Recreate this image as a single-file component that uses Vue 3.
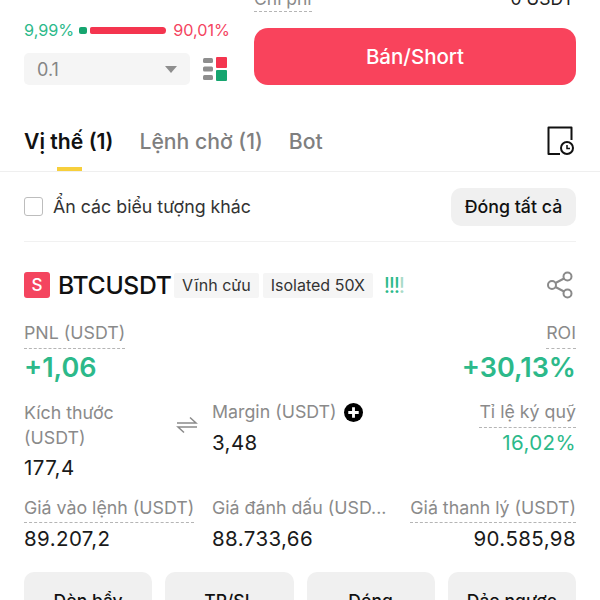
<script setup>
const actions = ['Đòn bẩy', 'TP/SL', 'Đóng', 'Đảo ngược']
</script>

<template>
  <div class="page">
    <section class="order">
      <div class="left">
        <div class="ratio">
          <span class="green">9,99%</span>
          <div class="bar"><i class="bar-buy"></i><i class="bar-sell"></i></div>
          <span class="red">90,01%</span>
        </div>
        <div class="qty-row">
          <div class="select"><span>0.1</span><i class="caret"></i></div>
          <svg class="book" width="26" height="26" viewBox="0 0 26 26">
            <rect x="1" y="2" width="10" height="5" rx="1.5" fill="#8e8e8e" />
            <rect x="1" y="10.5" width="10" height="5" rx="1.5" fill="#8e8e8e" />
            <rect x="1" y="19" width="10" height="5" rx="1.5" fill="#8e8e8e" />
            <rect x="14" y="1" width="11" height="11" rx="1" fill="#f4354f" />
            <rect x="14" y="14" width="11" height="11" rx="1" fill="#16a56f" />
          </svg>
        </div>
      </div>
      <div class="right">
        <div class="fee"><span class="dotted fee-label">Chi phí</span><span class="fee-value">0 USDT</span></div>
        <button class="short">Bán/Short</button>
      </div>
    </section>

    <nav class="tabs">
      <span class="tab active">Vị thế (1)</span>
      <span class="tab">Lệnh chờ (1)</span>
      <span class="tab">Bot</span>
      <svg class="history" width="30" height="30" viewBox="0 0 30 30" fill="none" stroke="#111" stroke-width="2">
        <path d="M14 28H2.500V1.500H25.500V14" stroke-linejoin="round" />
        <circle cx="21" cy="22" r="6" />
        <path d="M21 19V22.500H24" stroke-width="1.500" />
      </svg>
    </nav>

    <div class="filter">
      <label class="check"><i class="box"></i>Ẩn các biểu tượng khác</label>
      <button class="close-all">Đóng tất cả</button>
    </div>

    <section class="position">
      <div class="symbol">
        <span class="side">S</span>
        <span class="name">BTCUSDT</span>
        <span class="tag">Vĩnh cửu</span>
        <span class="tag">Isolated 50X</span>
        <span class="bangs"><b>!</b><b>!</b><b>!</b><b class="dim">!</b></span>
        <svg class="share" width="28" height="28" viewBox="0 0 28 28" fill="none" stroke="#8a8a8a" stroke-width="2">
          <circle cx="6" cy="14" r="4" />
          <circle cx="21.500" cy="5.500" r="4" />
          <circle cx="21.500" cy="22.500" r="4" />
          <path d="M9.500 12L18 7.500M9.500 16L18 20.500" />
        </svg>
      </div>

      <div class="pnl">
        <div class="col">
          <span class="label dotted">PNL (USDT)</span>
          <span class="big">+1,06</span>
        </div>
        <div class="col end">
          <span class="label dotted">ROI</span>
          <span class="big">+30,13%</span>
        </div>
      </div>

      <div class="grid size-row">
        <div class="col">
          <span class="label wrap">Kích thước (USDT)</span>
          <span class="value mt-size">177,4</span>
        </div>
        <div class="col">
          <span class="label with-icon">
            <svg class="swap" width="22" height="20" viewBox="0 0 22 20" fill="none" stroke="#8a8a8a" stroke-width="1.500">
              <path d="M1 8H20L14 2.500M21 12H2L8 17.500" />
            </svg>
            Margin (USDT)
            <svg class="plus" width="19" height="19" viewBox="0 0 20 20">
              <circle cx="10" cy="10" r="10" fill="#000" />
              <path d="M10 4.500V15.500M4.500 10H15.500" stroke="#fff" stroke-width="3" />
            </svg>
          </span>
          <span class="value">3,48</span>
        </div>
        <div class="col end">
          <span class="label dotted">Tỉ lệ ký quỹ</span>
          <span class="value pct">16,02%</span>
        </div>
      </div>

      <div class="grid price-row">
        <div class="col">
          <span class="label dotted">Giá vào lệnh (USDT)</span>
          <span class="value">89.207,2</span>
        </div>
        <div class="col">
          <span class="label clip">Giá đánh dấu (USD...</span>
          <span class="value">88.733,66</span>
        </div>
        <div class="col end">
          <span class="label dotted">Giá thanh lý (USDT)</span>
          <span class="value">90.585,98</span>
        </div>
      </div>

      <div class="actions">
        <button v-for="a in actions" :key="a" class="action">{{ a }}</button>
      </div>
    </section>
  </div>
</template>

<style scoped>
.page {
  width: 600px;
  height: 600px;
  overflow: hidden;
  background: #fff;
  font-family: Inter, "Noto Sans", sans-serif;
  color: #111;
}
button { font-family: inherit; border: 0; padding: 0; }
i { display: block; }
.green { color: #2cb98a; }
.red { color: #f4455f; }
.dotted { border-bottom: 1px dashed #b5b5b5; padding-bottom: 3px; }

.order { display: flex; gap: 24px; padding: 0 24px; margin-top: -10px; height: 95px; }
.left { width: 206px; padding-top: 28px; }
.ratio { display: flex; align-items: center; justify-content: space-between; font-size: 16.200px; height: 24px; }
.bar { display: flex; gap: 3px; width: 87px; margin-left: -2px; }
.bar-buy { width: 8px; height: 7px; border-radius: 2px; background: #16a56f; }
.bar-sell { flex: 1; height: 7px; border-radius: 2px 4px 4px 2px; background: #f4354f; }
.qty-row { display: flex; align-items: center; gap: 12px; margin-top: 11px; }
.select {
  width: 166px; height: 32px; border-radius: 5px; background: #f5f5f5; box-sizing: border-box;
  padding: 0 13px; display: flex; align-items: center; justify-content: space-between;
  font-size: 18px; color: #858585;
}
.caret { width: 0; height: 0; border: 6px solid transparent; border-top: 7px solid #8e8e8e; border-bottom: 0; }
.right { flex: 1; }
.fee { display: flex; justify-content: space-between; height: 23px; font-size: 17.500px; line-height: 20px; margin-top: -1px; }
.fee-label { color: #8a8a8a; height: 19px; padding-bottom: 3px; }
.fee-value { color: #222; padding-right: 2px; }
.short {
  display: block; width: 100%; height: 57px; margin-top: 16px; border-radius: 14px;
  background: #f9435c; color: #fff; font-size: 20.500px; font-weight: 500;
}

.tabs {
  display: flex; align-items: flex-start; gap: 26px; height: 78px; padding: 29px 24px 0;
  box-sizing: border-box; border-bottom: 1px solid #efefef; position: relative; margin-top: 9px;
}
.tab { font-size: 21.200px; font-weight: 500; color: #7f7f7f; line-height: 36px; }
.tab.active { color: #111; font-weight: 600; position: relative; height: 48px; }
.tab.active::after { content: ""; position: absolute; left: 33px; bottom: 0; width: 25px; height: 4px; background: #f7cf3c; }
.history { margin-left: auto; margin-top: 3px; margin-right: 0; }

.filter {
  display: flex; align-items: center; justify-content: space-between; height: 69px; margin: 0 24px;
  border-bottom: 1px solid #f1f1f1;
}
.check { display: flex; align-items: center; gap: 10px; font-size: 17.800px; color: #333; }
.box { width: 17px; height: 17px; border: 1.500px solid #bdbdbd; border-radius: 3px; }
.close-all { width: 125px; height: 38px; border-radius: 10px; background: #f0f0f0; color: #111; font-size: 17.800px; font-weight: 500; }

.position { padding: 0 24px; }
.symbol { display: flex; align-items: center; height: 26px; margin-top: 30px; }
.side {
  width: 26px; height: 26px; border-radius: 3px; background: #f4455f; color: #fff; font-size: 17px; font-weight: 500;
  display: flex; align-items: center; justify-content: center;
}
.name { font-size: 24.700px; font-weight: 500; margin-left: 8px; letter-spacing: -0.300px; width: 116px; white-space: nowrap; }
.tag {
  height: 25px; line-height: 25px; padding: 0 8px; margin-right: 4px; background: #f5f5f5; border-radius: 2px;
  font-size: 16px; color: #333; white-space: nowrap;
}
.bangs { display: flex; margin-left: 7px; color: #2cb98a; font-size: 22px; line-height: 26px; }
.bangs b { font-weight: 400; width: 5px; text-align: center; }
.bangs .dim { color: #a8dac7; }
.share { margin-left: auto; margin-right: 2px; }

.col { display: flex; flex-direction: column; align-items: flex-start; }
.end { align-items: flex-end; text-align: right; }
.label { font-size: 17.800px; color: #8a8a8a; line-height: 24px; white-space: nowrap; }
.label.wrap { white-space: normal; width: 110px; line-height: 25px; }
.value { font-size: 20.500px; letter-spacing: 0.400px; line-height: 24px; color: #1a1a1a; }
.value.pct { color: #2cb98a; }
.big { font-size: 27px; font-weight: 600; color: #2cb98a; line-height: 36px; margin-top: 1px; }

.pnl { display: flex; justify-content: space-between; margin-top: 23px; height: 71px; }
.grid { display: grid; grid-template-columns: 188px 1fr auto; }
.size-row { margin-top: 8px; height: 85px; }
.size-row .value { margin-top: 7px; }
.size-row .end .value { margin-top: 3px; }
.size-row .value.mt-size { margin-top: 6px; }
.with-icon { position: relative; display: flex; align-items: center; gap: 7px; }
.swap { position: absolute; left: -36px; top: 15px; }
.price-row { margin-top: 11px; }
.price-row .dotted { padding-bottom: 2px; }
.price-row .clip { padding-bottom: 3px; }
.price-row .value { margin-top: 4px; }
.actions { display: grid; grid-template-columns: repeat(4, 1fr); gap: 13px; margin-top: 21px; }
.action { height: 56px; border-radius: 10px; background: #f0f0f0; color: #111; font-size: 17.500px; font-weight: 500; }
</style>
